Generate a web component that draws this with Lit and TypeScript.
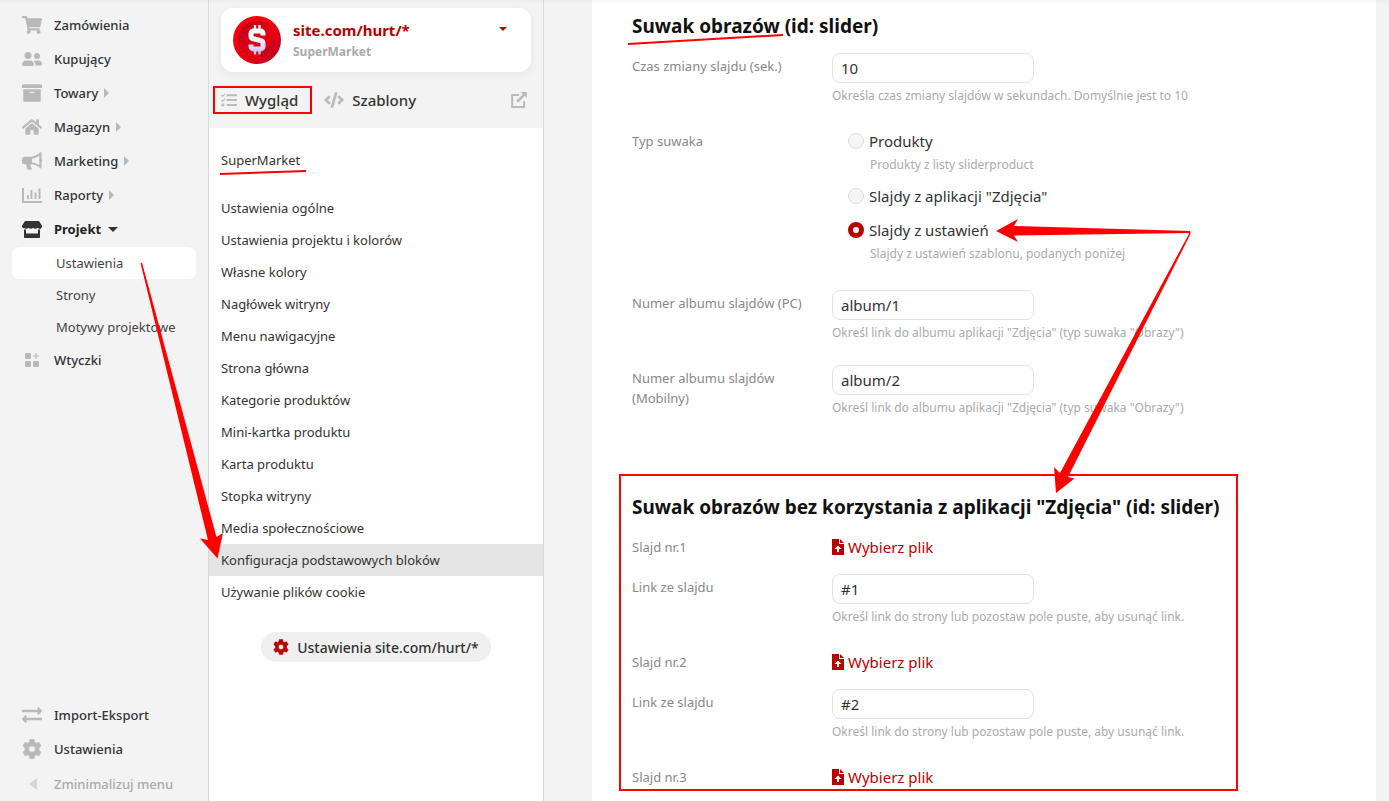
import { LitElement, html, css, svg } from "lit";
import { customElement } from "lit/decorators.js";
import { classMap } from "lit/directives/class-map.js";

const icons: Record<string, { box: string; art: unknown }> = {
  cart: {
    box: "0 0 576 512",
    art: svg`<path d="M528.12 301.319l47.273-208C578.806 78.301 567.391 64 551.99 64H159.208l-9.166-44.81C147.758 8.021 137.93 0 126.529 0H24C10.745 0 0 10.745 0 24v16c0 13.255 10.745 24 24 24h69.883l70.248 343.435C147.325 417.1 136 435.222 136 456c0 30.928 25.072 56 56 56s56-25.072 56-56c0-15.674-6.447-29.835-16.824-40h209.647C430.447 426.165 424 440.326 424 456c0 30.928 25.072 56 56 56s56-25.072 56-56c0-22.172-12.888-41.332-31.579-50.405l5.517-24.276c3.413-15.018-8.002-29.319-23.403-29.319H218.117l-6.545-32h293.145c11.206 0 20.92-7.754 23.403-18.681z"/>`,
  },
  users: {
    box: "0 0 20 20",
    art: svg`<circle cx="6" cy="6.500" r="3.500"/><circle cx="15" cy="7" r="3"/><path d="M0 15.600C0 13 1.800 11.400 4 11.400h4c2.200 0 4 1.600 4 4.200 0 .8-.5 1.400-1.300 1.400H1.300C.5 17 0 16.400 0 15.600zM11.800 11.900c.6-.3 1.200-.5 2-.5h2.700c2 0 3.500 1.500 3.500 3.700 0 .8-.5 1.300-1.300 1.300h-5.300c.1-1.800-.4-3.400-1.600-4.500z"/>`,
  },
  box: {
    box: "0 0 512 512",
    art: svg`<path d="M32 448c0 17.700 14.300 32 32 32h384c17.700 0 32-14.300 32-32V160H32v288zm160-212c0-6.600 5.400-12 12-12h104c6.600 0 12 5.400 12 12v8c0 6.600-5.400 12-12 12H204c-6.600 0-12-5.400-12-12v-8zM480 32H32C14.300 32 0 46.300 0 64v48c0 8.800 7.200 16 16 16h480c8.800 0 16-7.200 16-16V64c0-17.700-14.300-32-32-32z"/>`,
  },
  home: {
    box: "0 0 576 512",
    art: svg`<path d="M280.37 148.26L96 300.11V464a16 16 0 0 0 16 16l112.06-.29a16 16 0 0 0 15.92-16V368a16 16 0 0 1 16-16h64a16 16 0 0 1 16 16v95.640a16 16 0 0 0 16 16.050L464 480a16 16 0 0 0 16-16V300L295.670 148.260a12.190 12.190 0 0 0-15.300 0zM571.600 251.470L488 182.560V44.050a12 12 0 0 0-12-12h-56a12 12 0 0 0-12 12v72.610L318.470 43a48 48 0 0 0-61 0L4.340 251.470a12 12 0 0 0-1.600 16.900l25.500 31A12 12 0 0 0 45.150 301l235.220-193.740a12.190 12.190 0 0 1 15.300 0L530.900 301a12 12 0 0 0 16.900-1.600l25.500-31a12 12 0 0 0-1.700-16.930z"/>`,
  },
  horn: {
    box: "0 0 20 20",
    art: svg`<path fill-rule="evenodd" d="M18.300 1.300c.6-.5 1.200-.2 1.200.5v6.400c.7.300.7 2.400 0 2.700v5.800c0 .7-.7 1-1.200.5-2.200-1.900-4.500-3.400-7.600-3.700l-2.200-.2c0 1.800.5 3 1.200 4 .4.700 0 1.400-.8 1.400H6.200c-.4 0-.8-.2-1-.7-.6-1.300-.9-2.900-.8-4.700H2.300C1 13.300 0 12.300 0 11V8c0-1.300 1-2.300 2.300-2.300h6.200c3.900 0 7.100-2 9.800-4.400zM17.300 4.600c-2.300 1.700-4.500 2.800-7.300 3.200v3.600c2.800.3 5 1.300 7.300 2.800z"/>`,
  },
  chart: {
    box: "0 0 20 20",
    art: svg`<path d="M0 3h2v13h18v2H1c-.6 0-1-.4-1-1z"/><rect x="5" y="10" width="2" height="4"/><rect x="8.500" y="5" width="2" height="9"/><rect x="12.500" y="7.500" width="2" height="6.500"/><rect x="16.500" y="3.500" width="2" height="10.500"/>`,
  },
  shop: {
    box: "0 0 20 20",
    art: svg`<path d="M3 2h14l3 4.800c.2 1.700-.8 2.900-2.300 2.900-1 0-1.700-.4-2.200-1-.5.600-1.400 1-2.200 1-1 0-1.700-.4-2.200-1-.5.600-1.300 1-2.200 1s-1.700-.4-2.200-1c-.5.600-1.300 1-2.200 1C3.400 9.700 3 9.300 2.500 9.200 1 9.200-.2 8.200 0 6.800z"/><path d="M2 10.500h2v4h12v-4h2V18c0 .6-.4 1-1 1H3c-.6 0-1-.4-1-1z"/>`,
  },
  plugins: {
    box: "0 0 20 20",
    art: svg`<rect x="3" y="3" width="6" height="6" rx="1"/><rect x="3" y="11" width="6" height="6" rx="1"/><rect x="11" y="11" width="6" height="6" rx="1"/><path d="M13.400 3h1.200v2.400H17v1.200h-2.400V9h-1.200V6.600H11V5.400h2.400z"/>`,
  },
  swap: {
    box: "0 0 20 20",
    art: svg`<path d="M0 4.800h15.500V2.700c0-.6.700-.9 1.100-.5l3.100 3.100c.4.400.4 1 0 1.400l-3.100 3.100c-.4.400-1.100.1-1.100-.5V7.200H0zM20 12.800H4.500v-2.100c0-.6-.7-.9-1.100-.5L.3 13.300c-.4.400-.4 1 0 1.400l3.100 3.100c.4.400 1.100.1 1.100-.5v-2.100H20z"/>`,
  },
  gear: {
    box: "0 0 20 20",
    art: svg`<path fill-rule="evenodd" d="M8 .5h4l.6 2.800 1.700 1L17 3.400l2 3.400-2.100 1.900v2.500L19 13.200l-2 3.400-2.700-.9-1.700 1-.6 2.800H8l-.6-2.800-1.700-1-2.700.9-2-3.400 2.100-1.900V8.700L1 6.800l2-3.400 2.700.9 1.700-1zM10 6.700a3.300 3.300 0 1 0 0 6.600 3.300 3.300 0 0 0 0-6.600z" stroke="currentColor" stroke-width=".8" stroke-linejoin="round"/>`,
  },
  list: {
    box: "0 0 20 20",
    art: svg`<path d="M7 2.800h13v2.500H7zM7 8.900h13v2.500H7zM7 15h13v2.500H7z"/><circle cx="2.400" cy="16.200" r="2"/><path d="M.5 4l1.500 1.500L5 2.300M.5 10L2 11.500 5 8.300" fill="none" stroke="currentColor" stroke-width="1.600"/>`,
  },
  code: {
    box: "0 0 640 512",
    art: svg`<path d="M278.900 511.500l-61-17.700c-6.400-1.800-10-8.500-8.200-14.900L346.200 8.700c1.800-6.400 8.500-10 14.900-8.200l61 17.700c6.400 1.800 10 8.500 8.200 14.900L293.800 503.300c-1.900 6.400-8.500 10.100-14.900 8.200zm-114-112.200l43.500-46.400c4.600-4.900 4.300-12.700-.8-17.200L117 256l90.600-79.700c5.100-4.500 5.500-12.300.8-17.200l-43.500-46.400c-4.500-4.800-12.100-5.100-17-.5L3.800 247.200c-5.100 4.700-5.100 12.800 0 17.500l144.100 135.100c4.900 4.600 12.500 4.400 17-.5zm327.200.6l144.100-135.100c5.100-4.700 5.100-12.800 0-17.500L492.100 112.100c-4.800-4.500-12.400-4.300-17 .5L431.600 159c-4.600 4.900-4.300 12.700.8 17.200L523 256l-90.600 79.700c-5.100 4.500-5.500 12.300-.8 17.200l43.500 46.400c4.500 4.900 12.100 5.100 17 .6z"/>`,
  },
  open: {
    box: "1.500 1 18 18",
    art: svg`<path d="M10.500 4.300H2.800V17.800h13.500V11.500" fill="none" stroke="currentColor" stroke-width="2.300"/><path d="M12.500 1h6.800v6.800l-2.300-2.200-7.500 7.500-2.200-2.200 7.500-7.500z"/>`,
  },
  file: {
    box: "0 0 12 16",
    art: svg`<path fill-rule="evenodd" d="M0 0h7v5h5v11H0zM6 6.500L2.500 10H5v3h2v-3h2.500z"/><path d="M8 0l4 4H8z"/>`,
  },
};

const icon = (name: string, size = "i20") =>
  html`<svg class=${size} viewBox=${icons[name].box} fill="currentColor" aria-hidden="true">${icons[name].art}</svg>`;

const nav = [
  { icon: "cart", text: "Zamówienia" },
  { icon: "users", text: "Kupujący" },
  { icon: "box", text: "Towary", more: true },
  { icon: "home", text: "Magazyn", more: true },
  { icon: "horn", text: "Marketing", more: true },
  { icon: "chart", text: "Raporty", more: true },
];

const pages = [
  "Ustawienia ogólne",
  "Ustawienia projektu i kolorów",
  "Własne kolory",
  "Nagłówek witryny",
  "Menu nawigacyjne",
  "Strona główna",
  "Kategorie produktów",
  "Mini-kartka produktu",
  "Karta produktu",
  "Stopka witryny",
  "Media społecznościowe",
  "Konfiguracja podstawowych bloków",
  "Używanie plików cookie",
];
const activePage = "Konfiguracja podstawowych bloków";

const base = css`
  * {
    box-sizing: border-box;
  }
  a {
    color: inherit;
    text-decoration: none;
  }
  button {
    font: inherit;
    color: inherit;
    border: 0;
    padding: 0;
    background: none;
  }
  svg {
    display: block;
    flex: none;
  }
  .i20 {
    width: 20px;
    height: 20px;
  }
  .i16 {
    width: 16px;
    height: 16px;
  }
`;

@customElement("side-nav")
export class SideNav extends LitElement {
  static styles = [
    base,
    css`
      :host {
        display: flex;
        flex-direction: column;
        justify-content: space-between;
        width: 209px;
        flex: none;
        padding-top: 8px;
        border-right: 1px solid #d9d9d9;
        font-size: 13px;
      }
      .item {
        display: flex;
        align-items: center;
        width: 100%;
        height: 34px;
        padding-left: 22px;
        font-weight: 500;
        color: #333;
      }
      .item .i20 {
        margin-right: 12px;
        color: #b9b9b9;
      }
      .item.current {
        font-weight: 700;
        color: #222;
      }
      .current .i20 {
        color: #333;
      }
      .more {
        margin-left: 6px;
        border: 5px solid transparent;
        border-right-width: 0;
        border-left-color: #b9b9b9;
      }
      .less {
        margin-left: 7px;
        border: 5px solid transparent;
        border-bottom-width: 0;
        border-top-color: #333;
      }
      .sub {
        display: flex;
        flex-direction: column;
        padding: 1px 12px 0;
        color: #444;
      }
      .sub a {
        padding-left: 44px;
        line-height: 32px;
        border-radius: 8px;
      }
      .sub .chosen {
        background: #fff;
      }
      .item.fold {
        height: 35px;
        color: #aaa;
      }
      .fold .arrow {
        margin: 0 17px 0 7px;
        border: 6px solid transparent;
        border-left-width: 0;
        border-right: 8px solid #d6d6d6;
      }
    `,
  ];

  render() {
    return html`
      <nav>
        ${nav.map(
          (n) => html`<a class="item" href="#">${icon(n.icon)}${n.text}${n.more ? html`<i class="more"></i>` : ""}</a>`
        )}
        <a class="item current" href="#">${icon("shop")}Projekt<i class="less"></i></a>
        <div class="sub">
          <a class="chosen" href="#">Ustawienia</a>
          <a href="#">Strony</a>
          <a href="#">Motywy projektowe</a>
        </div>
        <a class="item" href="#">${icon("plugins")}Wtyczki</a>
      </nav>
      <div>
        <a class="item" href="#">${icon("swap")}Import-Eksport</a>
        <a class="item" href="#">${icon("gear")}Ustawienia</a>
        <button class="item fold"><i class="arrow"></i>Zminimalizuj menu</button>
      </div>
    `;
  }
}

@customElement("theme-panel")
export class ThemePanel extends LitElement {
  static styles = [
    base,
    css`
      :host {
        display: flex;
        flex-direction: column;
        width: 335px;
        flex: none;
        border-right: 1px solid #d9d9d9;
        background: #fff;
        font-size: 13px;
        color: #333;
      }
      header {
        height: 128px;
        padding: 8px 12px 0;
        background: #f3f3f3;
      }
      .site {
        display: flex;
        align-items: center;
        gap: 12px;
        width: 100%;
        height: 64px;
        padding: 0 24px 0 12px;
        border-radius: 12px;
        background: #fff;
        box-shadow: 0 2px 8px rgba(0, 0, 0, 0.06);
        text-align: left;
      }
      .logo {
        width: 48px;
        height: 48px;
      }
      .names {
        flex: 1;
        display: flex;
        flex-direction: column;
      }
      .names b {
        font-size: 15px;
        line-height: 24px;
        color: #b80000;
      }
      .names small {
        font-size: 12px;
        line-height: 20px;
        font-weight: 700;
        color: #aaa;
      }
      .drop {
        margin-bottom: 22px;
        border: 4px solid transparent;
        border-bottom-width: 0;
        border-top-color: #b80000;
      }
      .tabs {
        display: flex;
        align-items: center;
        height: 56px;
        font-size: 15px;
        font-weight: 500;
      }
      .tabs a {
        display: flex;
        align-items: center;
        gap: 8px;
        margin-right: 26px;
      }
      .tabs svg {
        color: #bbb;
      }
      .tabs .out {
        margin: 0 4px 0 auto;
      }
      .pages {
        display: flex;
        flex-direction: column;
        padding-top: 16px;
      }
      .pages a {
        padding-left: 12px;
        line-height: 32px;
      }
      .pages .root {
        margin-bottom: 16px;
      }
      .pages .chosen {
        background: #e4e4e4;
      }
      .config {
        display: flex;
        align-items: center;
        align-self: center;
        gap: 8px;
        height: 30px;
        margin-top: 24px;
        padding: 0 12px;
        border-radius: 15px;
        background: #f0f0f0;
        font-size: 14px;
        font-weight: 500;
      }
      .config svg {
        color: #b80000;
      }
    `,
  ];

  render() {
    return html`
      <header>
        <button class="site">
          <svg class="logo" viewBox="0 0 48 48" aria-hidden="true">
            <defs>
              <linearGradient id="ring" x1="0" y1="0" x2="1" y2="1">
                <stop offset="0" stop-color="#ff000c" />
                <stop offset="0.6" stop-color="#e60012" />
                <stop offset="1" stop-color="#a80028" />
              </linearGradient>
              <linearGradient id="coin" x1="0" y1="0" x2="1" y2="1">
                <stop offset="0" stop-color="#b8001e" />
                <stop offset="1" stop-color="#ff0008" />
              </linearGradient>
              <linearGradient id="sign" gradientUnits="userSpaceOnUse" x1="0" y1="9" x2="0" y2="38">
                <stop offset="0.4" stop-color="#fff" />
                <stop offset="1" stop-color="#c4c0f4" />
              </linearGradient>
            </defs>
            <circle cx="24" cy="24" r="24" fill="url(#ring)" />
            <circle cx="24" cy="24" r="19" fill="url(#coin)" />
            <path d="M25 38l8-6 9-9a19 19 0 0 1-14 19z" fill="#a80028" opacity="0.6" />
            <g fill="none" stroke="url(#sign)">
              <path
                d="M30 19.500V17.500c0-1.400-1.100-2.500-2.500-2.500h-7c-1.400 0-2.500 1.100-2.500 2.500v2.700c0 1.300.8 2.200 2 2.500l8 2c1.200.3 2 1.200 2 2.500v3.300c0 1.400-1.100 2.500-2.500 2.500h-7c-1.400 0-2.500-1.100-2.500-2.500V28.500"
                stroke-width="5"
              />
              <path d="M22 9v5M26.500 9v5M22 34v4.500M26.500 34v4.500" stroke-width="2.400" />
            </g>
          </svg>
          <span class="names"><b>site.com/hurt/*</b><small>SuperMarket</small></span>
          <i class="drop"></i>
        </button>
        <div class="tabs">
          <a href="#">${icon("list", "i16")}Wygląd</a>
          <a href="#">${icon("code")}Szablony</a>
          <a class="out" href="#" aria-label="Otwórz">${icon("open", "i16")}</a>
        </div>
      </header>
      <nav class="pages">
        <a class="root" href="#">SuperMarket</a>
        ${pages.map((p) => html`<a class=${classMap({ chosen: p === activePage })} href="#">${p}</a>`)}
      </nav>
      <button class="config">${icon("gear", "i16")}Ustawienia site.com/hurt/*</button>
    `;
  }
}

@customElement("slider-form")
export class SliderForm extends LitElement {
  static styles = [
    base,
    css`
      :host {
        display: block;
        padding: 12px 40px 0;
        background: #fff;
        font-size: 13px;
      }
      h2 {
        margin: 0 0 13px;
        font-size: 19px;
        line-height: 28px;
        font-weight: 700;
        color: #111;
      }
      section + section {
        margin-top: 75px;
      }
      .row {
        display: grid;
        grid-template-columns: 180px 1fr;
        column-gap: 20px;
        margin-bottom: 22px;
      }
      .row.pick {
        margin-bottom: 14px;
      }
      .name {
        padding-top: 3px;
        line-height: 20px;
        color: #888;
      }
      .text {
        display: block;
        width: 202px;
        height: 30px;
        padding: 0 8px;
        border: 1px solid #e2e2e2;
        border-radius: 8px;
        background: #fff;
        font: inherit;
        font-size: 15px;
        color: #333;
      }
      .hint {
        display: block;
        font-size: 12px;
        line-height: 21px;
        color: #aaa;
      }
      .text + .hint {
        margin-top: 2px;
      }
      .options {
        display: flex;
        flex-direction: column;
        gap: 8px;
        padding: 0 0 4px 16px;
      }
      .option {
        display: flex;
        align-items: center;
        gap: 5px;
        height: 26px;
        font-size: 15px;
        color: #333;
      }
      .option input {
        appearance: none;
        width: 16px;
        height: 16px;
        margin: 0;
        border: 1px solid #ddd;
        border-radius: 50%;
        background: #f5f5f5;
      }
      .option input:checked {
        border: 5px solid #b80000;
        background: #fff;
      }
      .options .hint {
        padding-left: 22px;
      }
      .file {
        display: flex;
        align-items: center;
        gap: 4px;
        height: 26px;
        font-size: 15px;
        color: #b80000;
      }
      .file svg {
        width: 12px;
        height: 16px;
      }
    `,
  ];

  private field(id: string, name: string, value: string, hint: string) {
    return html`<div class="row">
      <label class="name" for=${id}>${name}</label>
      <div><input class="text" id=${id} .value=${value} /><span class="hint">${hint}</span></div>
    </div>`;
  }

  private pick(n: number) {
    return html`<div class="row pick">
      <span class="name" id="slide${n}">Slajd nr.${n}</span>
      <button class="file" aria-describedby="slide${n}">${icon("file", "doc")}Wybierz plik</button>
    </div>`;
  }

  render() {
    const album = `Określ link do albumu aplikacji "Zdjęcia" (typ suwaka "Obrazy")`;
    const link = "Określ link do strony lub pozostaw pole puste, aby usunąć link.";
    return html`
      <section>
        <h2>Suwak obrazów (id: slider)</h2>
        ${this.field("time", "Czas zmiany slajdu (sek.)", "10", "Określa czas zmiany slajdów w sekundach. Domyślnie jest to 10")}
        <div class="row">
          <span class="name" id="type">Typ suwaka</span>
          <div class="options" role="radiogroup" aria-labelledby="type">
            <div>
              <label class="option"><input type="radio" name="type" />Produkty</label>
              <span class="hint">Produkty z listy sliderproduct</span>
            </div>
            <label class="option"><input type="radio" name="type" />Slajdy z aplikacji "Zdjęcia"</label>
            <div>
              <label class="option"><input type="radio" name="type" checked />Slajdy z ustawień</label>
              <span class="hint">Slajdy z ustawień szablonu, podanych poniżej</span>
            </div>
          </div>
        </div>
        ${this.field("pc", "Numer albumu slajdów (PC)", "album/1", album)}
        ${this.field("mobile", "Numer albumu slajdów (Mobilny)", "album/2", album)}
      </section>
      <section>
        <h2>Suwak obrazów bez korzystania z aplikacji "Zdjęcia" (id: slider)</h2>
        ${this.pick(1)} ${this.field("link1", "Link ze slajdu", "#1", link)} ${this.pick(2)}
        ${this.field("link2", "Link ze slajdu", "#2", link)} ${this.pick(3)}
      </section>
    `;
  }
}

@customElement("app-root")
export class AppRoot extends LitElement {
  static styles = [
    base,
    css`
      :host {
        display: flex;
        position: relative;
        height: 100vh;
        overflow: hidden;
        background: #f3f3f3;
        font-family: "Noto Sans", sans-serif;
      }
      main {
        flex: 1;
        min-width: 0;
        padding: 0 13px 0 48px;
      }
      slider-form {
        min-height: 100%;
      }
      .shade {
        position: absolute;
        inset: 0 0 auto;
        height: 5px;
        background: linear-gradient(rgba(0, 0, 0, 0.03), transparent);
      }
      .marks {
        position: absolute;
        top: 0;
        left: 0;
        width: 1389px;
        height: 801px;
        pointer-events: none;
      }
    `,
  ];

  render() {
    return html`
      <side-nav></side-nav>
      <theme-panel></theme-panel>
      <main><slider-form></slider-form></main>
      <div class="shade"></div>
      <svg class="marks" viewBox="0 0 1389 801" fill="#f00" aria-hidden="true">
        <g fill="none" stroke="#f00" stroke-width="2">
          <rect x="214" y="87" width="97" height="26" />
          <rect x="620" y="475" width="617" height="315" />
          <path d="M220 174l86-3M628 44l155-9" />
        </g>
        <path d="M140.500 263l1.500-.2L216.500 537l6.500-4-5.500 25.500L200 538.500l8 1.500z" />
        <path d="M1190 231v2L1014 235.500l4 6.500-22-11 22-12-4 7z" />
        <path d="M1190 232l1 1L1068 477l6.500 1.500L1056 493l-2-26 6 6z" />
      </svg>
    `;
  }
}
